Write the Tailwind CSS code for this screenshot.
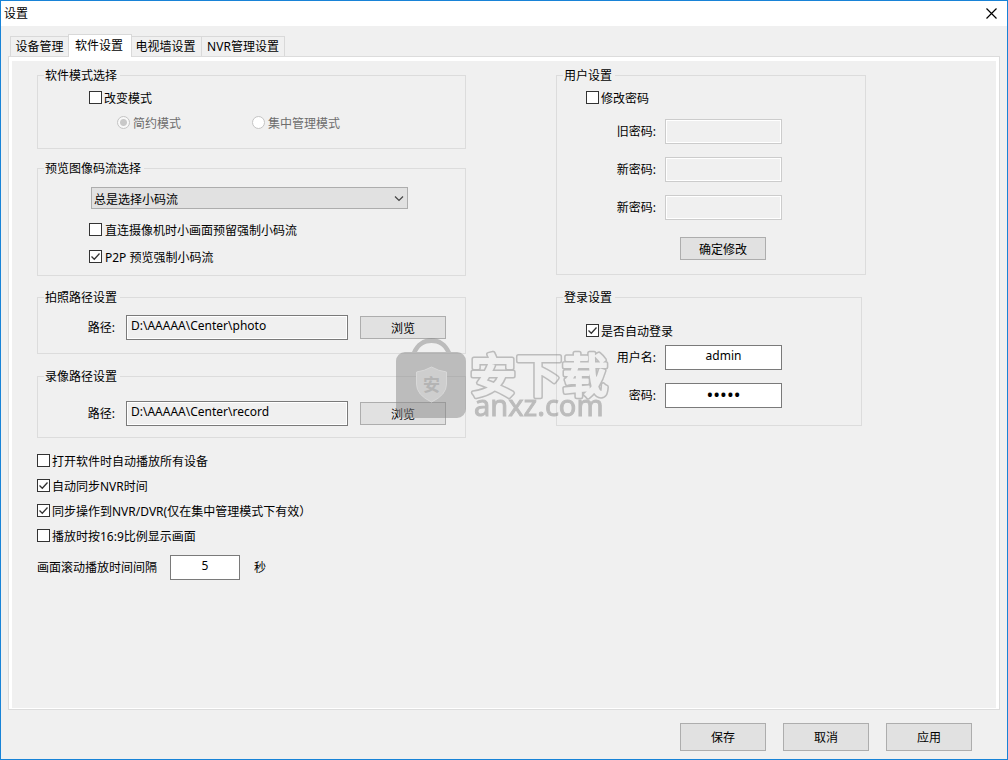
<!DOCTYPE html>
<html lang="zh-CN">
<head>
<meta charset="utf-8">
<title>设置</title>
<script src="https://cdn.jsdelivr.net/npm/@tailwindcss/browser@4"></script>
</head>
<body class="min-h-screen bg-[#f0f0f0] font-['Noto_Sans','Noto_Sans_CJK_SC',sans-serif] text-xs text-black">
<div class="relative flex min-h-screen flex-col border border-[#1883d7]">
  <header class="flex h-[25px] items-center justify-between bg-white pl-[3px] pr-2.5">
    <h1>设置</h1>
    <button type="button" aria-label="关闭">
      <svg class="size-[11px]" viewBox="0 0 11 11" fill="none" stroke="#000" stroke-width="1.2"><path d="M.5.5l10 10M10.5.5l-10 10"/></svg>
    </button>
  </header>

  <nav class="mt-2 flex items-end pl-[9px]" role="tablist">
    <button type="button" role="tab" class="h-5 w-[59px] border border-b-0 border-[#d9d9d9] whitespace-nowrap">设备管理</button>
    <button type="button" role="tab" aria-selected="true" class="relative -mb-px -ml-px h-[23px] w-16 border border-b-0 border-[#d9d9d9] bg-white pr-0.5 whitespace-nowrap">软件设置</button>
    <button type="button" role="tab" class="-ml-px h-5 w-[71px] border border-b-0 border-[#d9d9d9] pr-0.5 whitespace-nowrap">电视墙设置</button>
    <button type="button" role="tab" class="-ml-px h-5 w-[84px] border border-b-0 border-[#d9d9d9] whitespace-nowrap">NVR管理设置</button>
  </nav>

  <main class="mx-[7px] flex grow border border-[#dcdcdc] bg-white pt-1 pr-[3px] pb-px pl-[3px]">
    <div class="flex grow items-start gap-[90px] bg-[#f0f0f0] pt-1.5 pl-[25px] leading-5">

      <section class="w-[429px] shrink-0">
        <fieldset class="border border-[#dcdcdc] pb-3.5">
          <legend class="ml-1.5 pt-px pr-[3px] pl-px leading-4">软件模式选择</legend>
          <label class="mt-[5px] ml-[51px] flex items-center gap-0.5"><input type="checkbox" class="mb-[3px] size-[13px] appearance-none border border-[#333] bg-white">改变模式</label>
          <div class="mt-[5px] flex pl-[79px] text-[#6d6d6d]">
            <label class="flex w-[135px] items-center gap-[3px]"><input type="radio" name="mode" checked disabled class="mb-[3px] size-[13px] appearance-none rounded-full border border-[#c4c4c4] bg-[radial-gradient(circle,#c8c8c8_3px,#f8f8f8_4px)]">简约模式</label>
            <label class="flex items-center gap-[3px]"><input type="radio" name="mode" disabled class="mb-[3px] size-[13px] appearance-none rounded-full border border-[#c4c4c4] bg-white">集中管理模式</label>
          </div>
        </fieldset>

        <fieldset class="mt-[11px] border border-[#dcdcdc] pb-[7px]">
          <legend class="ml-1.5 pt-px pr-[3px] pl-px leading-4">预览图像码流选择</legend>
          <div class="relative mt-2.5 ml-[53px] w-[317px]">
            <select aria-label="预览图像码流选择" class="block h-[22px] w-full appearance-none border border-[#adadad] bg-[#e1e1e1] pt-0.5 pl-0.5"><option>总是选择小码流</option></select>
            <svg class="pointer-events-none absolute top-2 right-1 h-[7px] w-2.5" viewBox="0 0 10 7" fill="none" stroke="#444" stroke-width="1.2"><path d="M1 1.500l4 4 4-4"/></svg>
          </div>
          <label class="mt-3 ml-[51px] flex items-center gap-[3px]"><input type="checkbox" class="mb-[3px] size-[13px] appearance-none border border-[#333] bg-white">直连摄像机时小画面预留强制小码流</label>
          <label class="relative mt-[7px] ml-[51px] flex items-center gap-[3px]"><input type="checkbox" checked class="mb-[3px] size-[13px] appearance-none border border-[#333] bg-white"><svg class="pointer-events-none absolute left-0 mb-[3px] size-[13px]" viewBox="0 0 13 13" fill="none" stroke="#333" stroke-width="1.3"><path d="M2.500 6.500l2.800 2.800 5.200-5.800"/></svg>P2P 预览强制小码流</label>
        </fieldset>

        <fieldset class="mt-[13px] border border-[#dcdcdc] pb-[13px]">
          <legend class="ml-1.5 pt-px pr-[3px] pl-px leading-4">拍照路径设置</legend>
          <div class="mt-[9px] flex items-center">
            <label for="photo" class="w-[77px] text-right">路径:</label>
            <input id="photo" value="D:\AAAAA\Center\photo" readonly class="ml-[11px] h-[25px] w-[222px] border border-[#7a7a7a] bg-[#f0f0f0] px-1 pb-1 shadow-[inset_0_0_0_1px_#fff]">
            <button type="button" class="ml-3 h-[23px] w-[86px] border border-[#adadad] bg-[#e1e1e1] pt-0.5">浏览</button>
          </div>
        </fieldset>

        <fieldset class="mt-3.5 border border-[#dcdcdc] pb-[11px]">
          <legend class="ml-1.5 pt-px pr-[3px] pl-px leading-4">录像路径设置</legend>
          <div class="mt-4 flex items-center">
            <label for="record" class="w-[77px] text-right">路径:</label>
            <input id="record" value="D:\AAAAA\Center\record" readonly class="ml-[11px] h-[25px] w-[222px] border border-[#7a7a7a] bg-[#f0f0f0] px-1 pb-1 shadow-[inset_0_0_0_1px_#fff]">
            <button type="button" class="ml-3 h-[23px] w-[86px] border border-[#adadad] bg-[#e1e1e1] pt-0.5">浏览</button>
          </div>
        </fieldset>

        <div class="mt-3.5 flex flex-col gap-[5px]">
          <label class="flex items-center gap-0.5"><input type="checkbox" class="mb-[3px] size-[13px] appearance-none border border-[#333] bg-white">打开软件时自动播放所有设备</label>
          <label class="relative flex items-center gap-0.5"><input type="checkbox" checked class="mb-[3px] size-[13px] appearance-none border border-[#333] bg-white"><svg class="pointer-events-none absolute left-0 mb-[3px] size-[13px]" viewBox="0 0 13 13" fill="none" stroke="#333" stroke-width="1.3"><path d="M2.500 6.500l2.800 2.800 5.200-5.800"/></svg>自动同步NVR时间</label>
          <label class="relative flex items-center gap-0.5"><input type="checkbox" checked class="mb-[3px] size-[13px] appearance-none border border-[#333] bg-white"><svg class="pointer-events-none absolute left-0 mb-[3px] size-[13px]" viewBox="0 0 13 13" fill="none" stroke="#333" stroke-width="1.3"><path d="M2.500 6.500l2.800 2.800 5.200-5.800"/></svg>同步操作到NVR/DVR(仅在集中管理模式下有效）</label>
          <label class="flex items-center gap-0.5"><input type="checkbox" class="mb-[3px] size-[13px] appearance-none border border-[#333] bg-white">播放时按16:9比例显示画面</label>
        </div>
        <div class="mt-2 flex items-center">
          <label for="interval">画面滚动播放时间间隔</label>
          <input id="interval" value="5" class="ml-[13px] h-[25px] w-[70px] border border-[#7a7a7a] bg-white pb-1 text-center">
          <span class="ml-3.5">秒</span>
        </div>
      </section>

      <section class="w-[310px] shrink-0">
        <fieldset class="border border-[#dcdcdc] pb-3.5">
          <legend class="ml-1.5 pt-px pr-[3px] pl-px leading-4">用户设置</legend>
          <label class="mt-[5px] flex items-center gap-0.5 pl-[29px]"><input type="checkbox" class="mb-[3px] size-[13px] appearance-none border border-[#333] bg-white">修改密码</label>
          <div class="mt-2.5 grid grid-cols-[99px_117px] items-center gap-x-[9px] gap-y-[13px]">
            <label for="old" class="text-right">旧密码:</label>
            <input id="old" type="password" disabled class="h-[25px] w-full border border-[#ccc] shadow-[inset_0_0_0_1px_#fff]">
            <label for="new1" class="text-right">新密码:</label>
            <input id="new1" type="password" disabled class="h-[25px] w-full border border-[#ccc] shadow-[inset_0_0_0_1px_#fff]">
            <label for="new2" class="text-right">新密码:</label>
            <input id="new2" type="password" disabled class="h-[25px] w-full border border-[#ccc] shadow-[inset_0_0_0_1px_#fff]">
          </div>
          <button type="button" class="mt-[17px] ml-[123px] block h-[23px] w-[86px] border border-[#adadad] bg-[#e1e1e1] pt-0.5 leading-4">确定修改</button>
        </fieldset>

        <fieldset class="mt-3.5 w-[306px] border border-[#dcdcdc] pb-[17px]">
          <legend class="ml-1.5 pt-px pr-[3px] pl-px leading-4">登录设置</legend>
          <label class="relative mt-4 ml-[29px] flex items-center gap-0.5"><input type="checkbox" checked class="mb-[3px] size-[13px] appearance-none border border-[#333] bg-white"><svg class="pointer-events-none absolute left-0 mb-[3px] size-[13px]" viewBox="0 0 13 13" fill="none" stroke="#333" stroke-width="1.3"><path d="M2.500 6.500l2.800 2.800 5.200-5.800"/></svg>是否自动登录</label>
          <div class="mt-[3px] grid grid-cols-[99px_117px] items-center gap-x-[9px] gap-y-[13px]">
            <label for="user" class="text-right">用户名:</label>
            <input id="user" value="admin" class="h-[25px] w-full border border-[#7a7a7a] bg-white pb-1 text-center">
            <label for="pass" class="text-right">密码:</label>
            <input id="pass" type="password" value="admin" class="h-[25px] w-full border border-[#7a7a7a] bg-white pb-[3px] text-center text-lg">
          </div>
        </fieldset>
      </section>
    </div>
  </main>

  <footer class="flex justify-end gap-[17px] pt-[13px] pr-[35px] pb-2">
    <button type="button" class="h-7 w-[86px] border border-[#adadad] bg-[#e1e1e1] pt-0.5">保存</button>
    <button type="button" class="h-7 w-[86px] border border-[#adadad] bg-[#e1e1e1] pt-0.5">取消</button>
    <button type="button" class="h-7 w-[86px] border border-[#adadad] bg-[#e1e1e1] pt-0.5">应用</button>
  </footer>

  <!-- Site watermark floating above the form -->
  <svg class="pointer-events-none absolute top-[334px] left-[394px] h-[88px] w-[220px]" viewBox="0 0 220 88" fill="#898989">
    <defs>
      <text id="mark" x="75" y="57" font-size="46" font-weight="500" font-family="Noto Sans CJK SC, sans-serif" stroke-linejoin="round">安下载</text>
      <mask id="ring" maskUnits="userSpaceOnUse" x="0" y="0" width="220" height="88">
        <use href="#mark" fill="#fff" stroke="#fff" stroke-width="5"/>
        <use href="#mark" fill="#000" stroke="#000" stroke-width="2"/>
      </mask>
    </defs>
    <g opacity=".5">
      <path d="M17 17C21 8 28 3 36.500 3S52 8 56 17H62a9 9 0 0 1 9 9V74a9 9 0 0 1-9 9H10a9 9 0 0 1-9-9V26a9 9 0 0 1 9-9ZM22 17H51C48 11 43 8 36.500 8S25 11 22 17Z" fill-rule="evenodd"/>
      <rect width="220" height="88" mask="url(#ring)"/>
      <text x="79" y="81" font-size="29" font-family="Noto Sans, sans-serif" stroke="#898989" stroke-width="1">anxz.com</text>
    </g>
    <path d="M36.500 32q7 4 15 5v12q0 11-15 18q-15-7-15-18V37q8-1 15-5Z" fill="#cecece" stroke="#d8d8d8"/>
    <text x="36.500" y="56" font-size="17" font-weight="700" text-anchor="middle" fill="#b4b4b4" font-family="Noto Sans CJK SC, sans-serif">安</text>
  </svg>
</div>
</body>
</html>
